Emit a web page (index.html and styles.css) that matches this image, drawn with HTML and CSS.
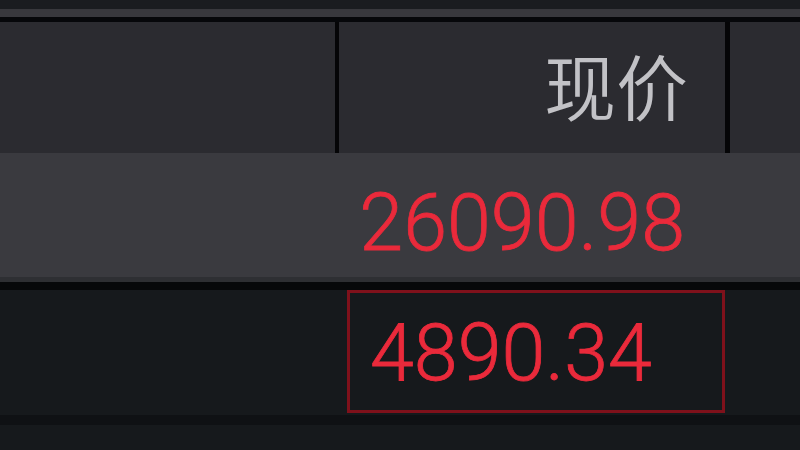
FILE: index.html
```html
<!DOCTYPE html>
<html lang="zh">
<head>
<meta charset="utf-8">
<link rel="stylesheet" href="styles.css">
</head>
<body>
<div class="topbar"></div>
<div class="strip"></div>
<div class="gap"></div>
<div class="row head">
  <div class="cell c1"></div>
  <div class="cell c2"><span class="hd">现价</span></div>
  <div class="cell c3"></div>
</div>
<div class="row sel">
  <div class="cell c1"></div>
  <div class="cell c2"><span class="num">26090.98</span></div>
  <div class="cell c3"></div>
</div>
<div class="rowline"></div>
<div class="row edit">
  <div class="cell c1"></div>
  <div class="cell c2"><div class="box"><span class="num">4890.34</span></div></div>
  <div class="cell c3"></div>
</div>
<div class="foot"></div>
</body>
</html>
```
FILE: styles.css
```css
html, body {
  margin: 0;
  padding: 0;
  background: #16191c;
  width: 800px;
  height: 450px;
  overflow: hidden;
  font-family: "Liberation Sans", "Noto Sans CJK SC", sans-serif;
}
.topbar { height: 9px; background: #1a1c20; }
.strip { height: 8px; background: #38383d; }
.gap { height: 5px; background: #06070a; }
.row { display: flex; }
.cell { box-sizing: border-box; }
.c1 { width: 339px; }
.c2 { width: 391px; }
.c3 { flex: 1; }
.head { height: 131px; background: #2b2b30; }
.head .c1 { border-right: 4px solid #050507; }
.head .c2 { border-right: 5px solid #050507; display: flex; align-items: center; justify-content: flex-end; padding-right: 37px; }
.hd {
  font-family: "Noto Sans CJK SC", sans-serif;
  font-size: 72px;
  font-weight: 350;
  line-height: 1;
  color: #c2c2c6;
  padding-bottom: 8px;
}
.sel { height: 124px; background: #3a3a3f; }
.sel .c2 { display: flex; align-items: center; justify-content: flex-end; padding-right: 45px; padding-top: 16px; }
.num {
  font-family: Roboto, "Liberation Sans", sans-serif;
  font-size: 79px;
  font-weight: 300;
  line-height: 1;
  color: #ea2a3b;
  -webkit-text-stroke: 0.8px #ea2a3b;
}
.rowline { height: 5px; background: #2e2f33; border-bottom: 8px solid #07080a; }
.edit { height: 125px; background: #16191c; }
.edit .c2 { padding-left: 8px; padding-right: 5px; }
.box {
  box-sizing: border-box;
  height: 123px;
  border: 3px solid #7f111b;
  display: flex;
  align-items: center;
  padding-left: 20px;
  padding-top: 4px;
}
.foot { height: 10px; background: #0f1114; }
```
